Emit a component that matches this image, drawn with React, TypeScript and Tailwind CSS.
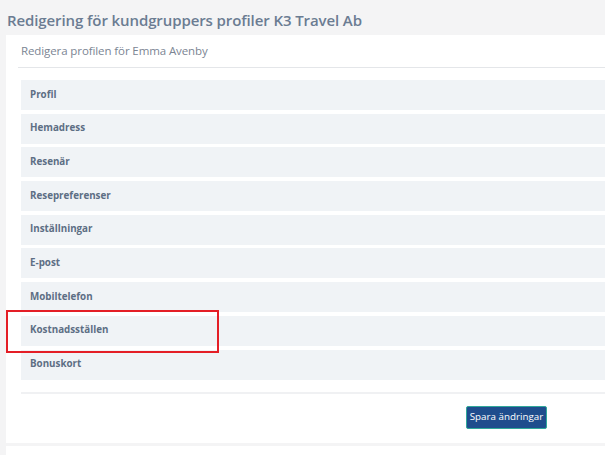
// Profile editor for customer group members
const SECTIONS = [
  "Profil",
  "Hemadress",
  "Resenär",
  "Resepreferenser",
  "Inställningar",
  "E-post",
  "Mobiltelefon",
  "Kostnadsställen",
  "Bonuskort",
];

export default function App() {
  return (
    <div
      className="w-[605px] h-[455px] overflow-hidden bg-[#f4f4f5]"
      style={{ fontFamily: '"Open Sans", "Noto Sans", sans-serif' }}
    >
      {/* Page title */}
      <div className="h-[35px] pl-[7px] flex items-center pt-[5px]">
        <h1 className="text-[15px] font-semibold text-[#6b7c92] tracking-[-0.1px] whitespace-nowrap">
          Redigering för kundgruppers profiler K3 Travel Ab
        </h1>
      </div>

      {/* Main card */}
      <div className="ml-[6px] bg-white pl-[12px] h-[408px] flex flex-col">
        <div className="h-[32px] flex items-center pl-[3px]">
          <span className="text-[11.5px] text-[#7b8593] tracking-[-0.1px] whitespace-nowrap">
            Redigera profilen för Emma Avenby
          </span>
        </div>
        <div className="h-px bg-[#e4e6e9]" />

        {/* Collapsible sections */}
        <div className="ml-[3px] mt-[12px] flex flex-col gap-[3.7px]">
          {SECTIONS.map((label) => (
            <div
              key={label}
              className="relative h-[30px] bg-[#f0f3f6] flex items-center pl-[9px]"
            >
              <span className="text-[9.8px] font-bold text-[#5d6e84]">{label}</span>
              {label === "Kostnadsställen" && (
                <div className="absolute z-10 left-[-15px] top-[-6px] w-[213px] h-[43px] border-2 border-[#e41e26]" />
              )}
            </div>
          ))}
        </div>

        <div className="ml-[3px] mt-[12px] h-[2px] bg-[#f0f1f3]" />

        {/* Footer with save button */}
        <div className="ml-[448px] mt-[12px]">
          <button className="w-[81px] h-[23px] rounded-[2px] bg-[#1f4d8d] border border-[#2fa89a] text-white text-[9.8px] flex items-center justify-center whitespace-nowrap">
            Spara ändringar
          </button>
        </div>
      </div>

      {/* Next card, cut off at the bottom */}
      <div className="ml-[6px] mt-[3px] bg-white h-[20px]" />
    </div>
  );
}
